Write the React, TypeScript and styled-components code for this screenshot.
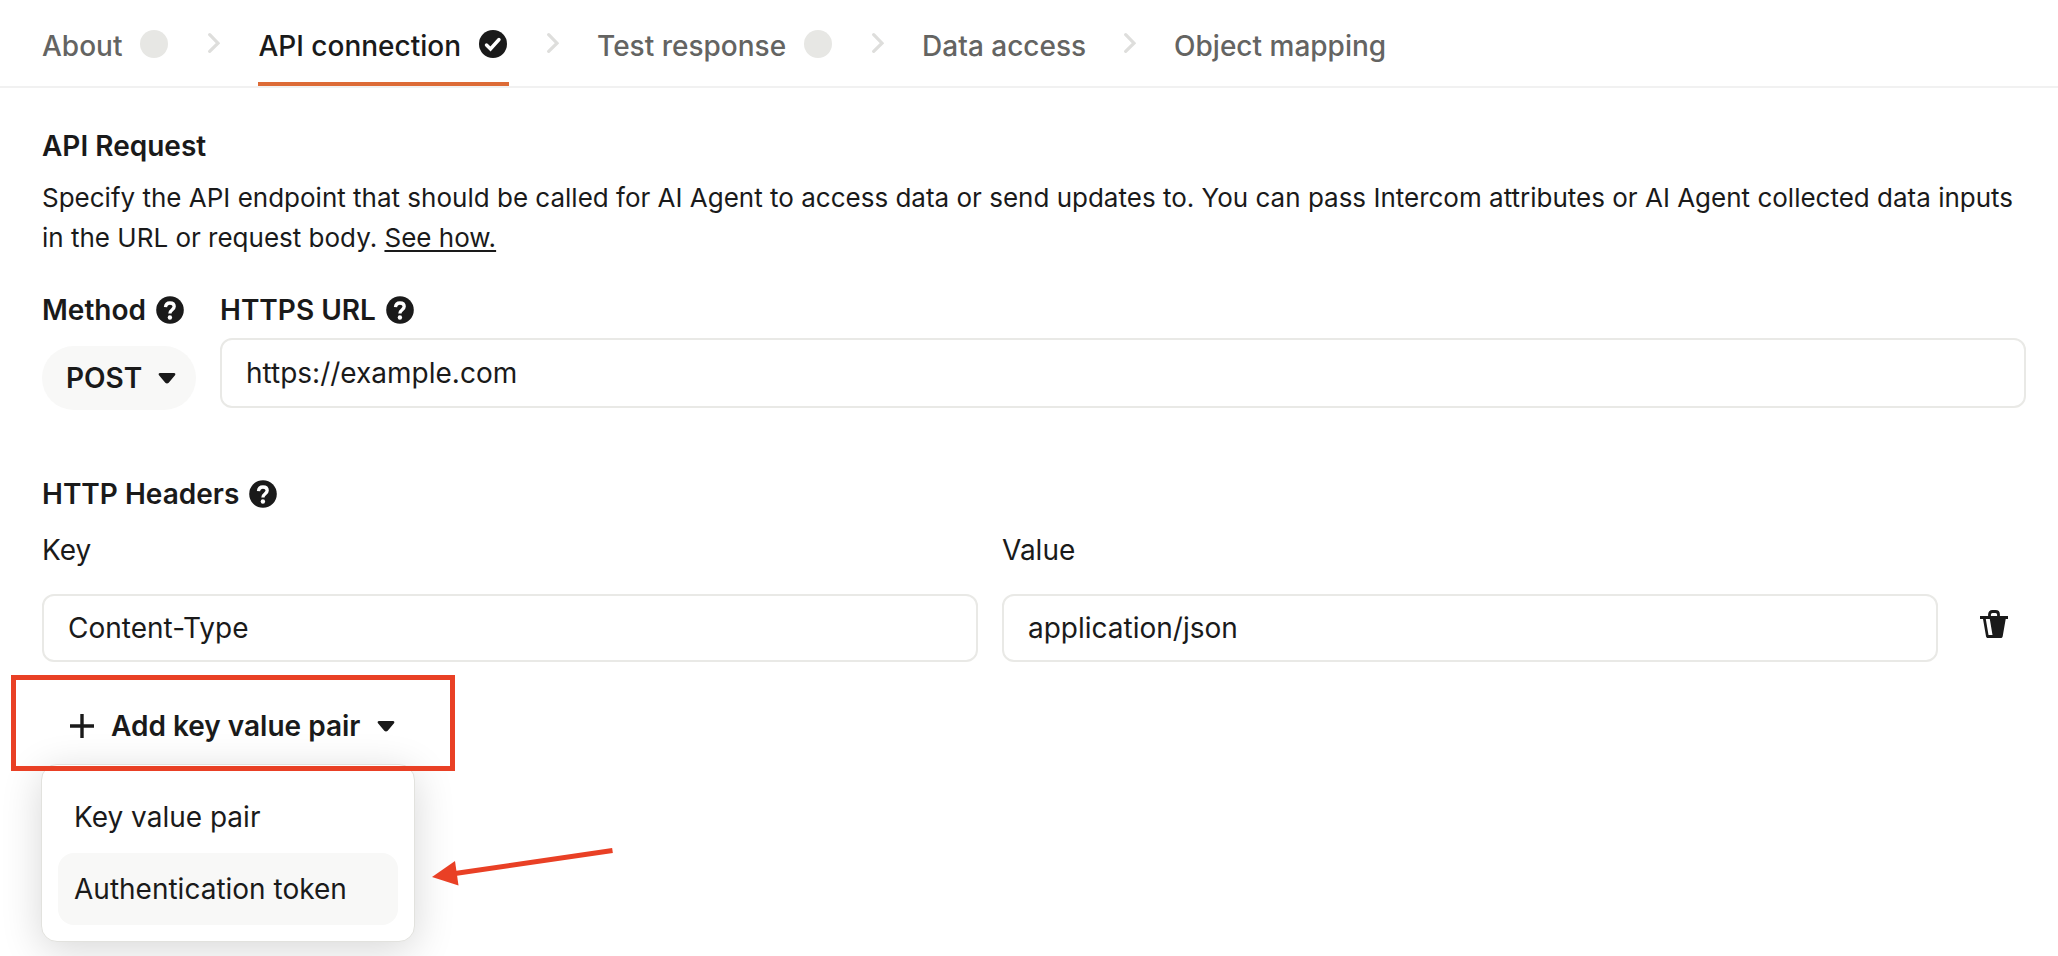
import React from "react";
import styled, { createGlobalStyle } from "styled-components";

const ink = "#1a1a1a";
const line = "#e9e9e6";
const muted = "#646462";
const accent = "#dd6b36";
const mark = "#e94025";

const GlobalStyle = createGlobalStyle`
  *, *::before, *::after { box-sizing: border-box; }
  body {
    margin: 0;
    background: #ffffff;
    color: ${ink};
    font-family: Inter, "Liberation Sans", sans-serif;
    font-size: 28px;
    line-height: 40px;
    font-optical-sizing: none;
    -webkit-font-smoothing: antialiased;
  }
  button, input, select { font: inherit; color: inherit; }
  svg { display: block; flex: none; }
`;

const StepNav = styled.nav`
  border-bottom: 2px solid #f1f1f1;
  padding: 0 42px;
`;

const StepList = styled.ol`
  display: flex;
  gap: 38px;
  margin: 0;
  padding: 0;
  list-style: none;
`;

const StepItem = styled.li`
  display: flex;
  align-items: center;
  gap: 38px;
`;

const StepLink = styled.a<{ $active?: boolean }>`
  display: flex;
  align-items: center;
  gap: 18px;
  padding: 26px 0 16px;
  border-bottom: 4px solid ${(p) => (p.$active ? accent : "transparent")};
  color: ${(p) => (p.$active ? ink : muted)};
  font-weight: 500;
  text-decoration: none;
  white-space: nowrap;

  svg { margin: 0 2px 4px 0; }
`;

const Main = styled.main`
  padding: 38px 32px 14px 42px;
`;

const Title = styled.h2`
  margin: 0;
  font-size: 28px;
  line-height: 40px;
  font-weight: 600;
`;

const Intro = styled.p`
  margin: 12px 0 32px;
  font-size: 26px;
`;

const TextLink = styled.a`
  color: inherit;
  text-decoration: underline;
  text-decoration-thickness: 2px;
  text-underline-offset: 3px;
`;

const RequestRow = styled.div`
  display: grid;
  grid-template-columns: 154px 1fr;
  column-gap: 24px;
  align-items: start;
  margin-bottom: 64px;
`;

const Field = styled.div<{ $gap: number }>`
  display: flex;
  flex-direction: column;
  gap: ${(p) => p.$gap}px;
  min-width: 0;
`;

const LabelRow = styled.div`
  display: flex;
  align-items: center;
  gap: 10px;
  font-weight: 600;
`;

const HelpButton = styled.button`
  padding: 0;
  border: 0;
  background: none;
`;

const SelectPill = styled.div`
  position: relative;
  height: 64px;

  svg {
    position: absolute;
    right: 20px;
    top: 27px;
    pointer-events: none;
  }
`;

const Select = styled.select`
  appearance: none;
  width: 100%;
  height: 100%;
  padding: 0 24px;
  border: 0;
  border-radius: 32px;
  background: #f8f8f7;
  font-weight: 600;
`;

const TextInput = styled.input<{ $tall?: boolean }>`
  width: 100%;
  height: ${(p) => (p.$tall ? 70 : 68)}px;
  padding: 0 24px;
  border: 2px solid ${line};
  border-radius: 12px;
  background: #ffffff;
  outline: none;
`;

const HeaderRow = styled.div`
  display: grid;
  grid-template-columns: 1fr 1fr 64px;
  column-gap: 24px;
  align-items: end;
  margin-top: 16px;
`;

const DeleteButton = styled.button`
  display: flex;
  justify-content: center;
  height: 68px;
  padding: 16px 0 0;
  border: 0;
  background: none;
`;

const AddArea = styled.div`
  position: relative;
  width: 374px;
  margin: 32px 0 0 -1px;
`;

const AddButton = styled.button`
  display: flex;
  align-items: center;
  gap: 17px;
  height: 64px;
  padding: 0 20px 0 29px;
  border: 0;
  background: none;
  font-weight: 600;
  white-space: nowrap;
`;

const Menu = styled.div`
  margin-top: 6px;
  padding: 16px;
  border: 1px solid #e2e2de;
  border-radius: 16px;
  background: #ffffff;
  box-shadow: 0 8px 40px rgba(0, 0, 0, 0.16);
`;

const MenuItem = styled.button<{ $active?: boolean }>`
  display: block;
  width: 100%;
  height: 72px;
  padding: 0 16px;
  border: 0;
  border-radius: 16px;
  background: ${(p) => (p.$active ? "#f8f8f7" : "transparent")};
  text-align: left;
`;

const Highlight = styled.div`
  position: absolute;
  left: -30px;
  top: -19px;
  width: 444px;
  height: 96px;
  border: 5px solid ${mark};
  pointer-events: none;
`;

const Pointer = styled.svg`
  position: absolute;
  left: 390px;
  top: 150px;
  pointer-events: none;
`;

function PendingDot() {
  return (
    <svg width="28" height="28" viewBox="0 0 28 28" aria-hidden="true">
      <circle cx="14" cy="14" r="14" fill="#e7e7e4" />
    </svg>
  );
}

function CheckDot() {
  return (
    <svg width="28" height="28" viewBox="0 0 28 28" aria-hidden="true">
      <circle cx="14" cy="14" r="14" fill={ink} />
      <path d="M7.5 15l4 4 8.500-9.500" fill="none" stroke="#fff" strokeWidth="3.400" strokeLinecap="round" />
    </svg>
  );
}

function Chevron() {
  return (
    <svg width="12" height="20" viewBox="0 0 12 20" aria-hidden="true">
      <path d="M1.700 1.700L10 10.200l-8.300 8.200" fill="none" stroke="#dededc" strokeWidth="3.200" strokeLinecap="round" />
    </svg>
  );
}

function Caret() {
  return (
    <svg width="18" height="11" viewBox="0 0 18 11" aria-hidden="true">
      <path d="M2 0h14c1.300 0 1.800 1.400 1 2.300l-6.300 7.400c-1 1.100-2.400 1.100-3.400 0L1 2.300C.2 1.400.7 0 2 0z" fill={ink} />
    </svg>
  );
}

function Help({ about }: { about: string }) {
  return (
    <HelpButton type="button" aria-label={`Help: ${about}`}>
      <svg width="28" height="28" viewBox="0 0 28 28" aria-hidden="true">
        <circle cx="14" cy="14" r="13.800" fill={ink} />
        <path
          d="M9.500 11.200C9.700 8.600 11.600 7 14 7c2.500 0 4.200 1.400 4.200 3.500 0 3.200-4.300 3.200-4.300 7"
          fill="none"
          stroke="#fff"
          strokeWidth="3.300"
        />
        <circle cx="13.900" cy="21.500" r="2.200" fill="#fff" />
      </svg>
    </HelpButton>
  );
}

function Trash() {
  return (
    <svg width="28" height="28" viewBox="0 0 28 28" aria-hidden="true">
      <path d="M9.500 7V4.500c0-2 1-3 3-3h3c2 0 3 1 3 3V7" fill="none" stroke={ink} strokeWidth="2.800" />
      <path fill={ink} fillRule="evenodd" d="M0 6h28v3h-2.300l-3 17.200c-.2 1.200-.8 1.800-2 1.800H8c-1.200 0-1.800-.6-2-1.800L3 9H0zM5.800 9l2.700 16h4L9.800 9z" />
    </svg>
  );
}

type Step = { label: string; status?: "pending" | "done"; active?: boolean };

const steps: Step[] = [
  { label: "About", status: "pending" },
  { label: "API connection", status: "done", active: true },
  { label: "Test response", status: "pending" },
  { label: "Data access" },
  { label: "Object mapping" },
];

export default function App() {
  return (
    <>
      <GlobalStyle />
      <StepNav aria-label="Setup steps">
        <StepList>
          {steps.map((step, i) => (
            <StepItem key={step.label}>
              <StepLink href="#" $active={step.active} aria-current={step.active ? "step" : undefined}>
                {step.label}
                {step.status === "pending" && <PendingDot />}
                {step.status === "done" && <CheckDot />}
              </StepLink>
              {i < steps.length - 1 && <Chevron />}
            </StepItem>
          ))}
        </StepList>
      </StepNav>
      <Main>
        <Title>API Request</Title>
        <Intro>
          Specify the API endpoint that should be called for AI Agent to access data or send updates to. You can pass
          Intercom attributes or AI Agent collected data inputs in the URL or request body.{" "}
          <TextLink href="#">See how.</TextLink>
        </Intro>
        <RequestRow>
          <Field $gap={16}>
            <LabelRow>
              <label htmlFor="method">Method</label>
              <Help about="method" />
            </LabelRow>
            <SelectPill>
              <Select id="method" defaultValue="POST">
                <option>GET</option>
                <option>POST</option>
              </Select>
              <Caret />
            </SelectPill>
          </Field>
          <Field $gap={8}>
            <LabelRow>
              <label htmlFor="url">HTTPS URL</label>
              <Help about="HTTPS URL" />
            </LabelRow>
            <TextInput id="url" $tall defaultValue="https://example.com" />
          </Field>
        </RequestRow>
        <LabelRow>
          <Title>HTTP Headers</Title>
          <Help about="HTTP headers" />
        </LabelRow>
        <HeaderRow>
          <Field $gap={24}>
            <label htmlFor="key">Key</label>
            <TextInput id="key" defaultValue="Content-Type" />
          </Field>
          <Field $gap={24}>
            <label htmlFor="value">Value</label>
            <TextInput id="value" defaultValue="application/json" />
          </Field>
          <DeleteButton type="button" aria-label="Delete header">
            <Trash />
          </DeleteButton>
        </HeaderRow>
        <AddArea>
          <AddButton type="button" aria-haspopup="menu" aria-expanded="true">
            <svg width="24" height="24" viewBox="0 0 24 24" aria-hidden="true">
              <path d="M12 0v24M0 12h24" stroke={ink} strokeWidth="3.400" />
            </svg>
            Add key value pair
            <Caret />
          </AddButton>
          <Menu role="menu">
            <MenuItem type="button" role="menuitem">
              Key value pair
            </MenuItem>
            <MenuItem type="button" role="menuitem" $active>
              Authentication token
            </MenuItem>
          </Menu>
          <Highlight />
          <Pointer width="184" height="44" viewBox="0 0 184 44" aria-hidden="true">
            <path d="M24 29.500L181.500 6.500" stroke={mark} strokeWidth="5" />
            <path d="M1 33L24 17l3.500 24.500z" fill={mark} />
          </Pointer>
        </AddArea>
      </Main>
    </>
  );
}
